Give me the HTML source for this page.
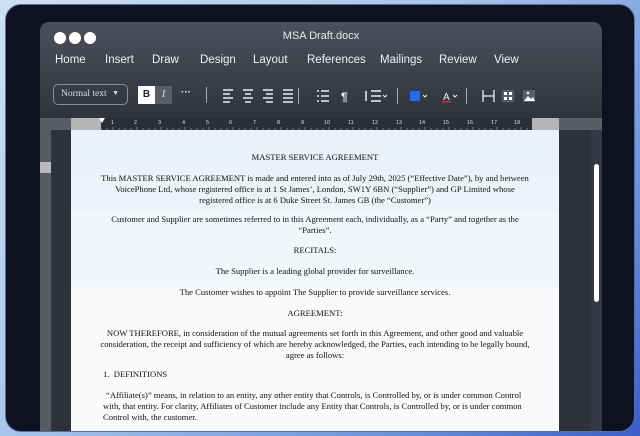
<!DOCTYPE html>
<html><head><meta charset="utf-8"><style>
*{margin:0;padding:0;box-sizing:border-box}
body{width:640px;height:436px;overflow:hidden;background:linear-gradient(135deg,#cfe0f4 0%,#a9c6ec 40%,#6f95dc 75%,#3a5fc8 100%);position:relative;font-family:"Liberation Sans",sans-serif}
.frame{position:absolute;left:5px;top:4px;width:630px;height:428px;background:#0d1120;border-radius:16px;border:1px solid #5a6f99;overflow:hidden}
.win{position:absolute;left:34px;top:17px;width:562px;height:420px;background:linear-gradient(#4d505c,#2f323d 100px);border-radius:9px 9px 0 0;overflow:hidden}
.dots{position:absolute;left:14px;top:9px}
.dots span{display:inline-block;width:12px;height:12px;border-radius:50%;background:#fff;margin-right:3px}
.title{position:absolute;left:0;right:0;top:8px;text-align:center;color:#e8e8ee;font-size:11px}
.menu{position:absolute;top:32px;left:15px;color:#f0f0f5;font-size:11.5px;white-space:nowrap}
.menu span{position:absolute}
.ruler{position:absolute;left:0;top:96px;width:562px;height:12px;background:#5a5d68}
.page{position:absolute;left:31px;top:108px;width:488px;height:320px;background:#f8fafc;font-family:"Liberation Serif",serif;font-size:8.6px;color:#111}
.t{position:absolute;left:0;right:0;text-align:center;white-space:nowrap}
.l{position:absolute;left:32px;white-space:nowrap}
</style></head><body>
<div class="frame">
<div class="win">
 <div class="dots"><span></span><span></span><span></span></div>
 <div class="title">MSA Draft.docx</div>
 <div class="menu">
  <span style="left:0">Home</span><span style="left:50px">Insert</span><span style="left:97px">Draw</span><span style="left:145px">Design</span><span style="left:198px">Layout</span><span style="left:252px">References</span><span style="left:325px">Mailings</span><span style="left:384px">Review</span><span style="left:439px">View</span>
 </div>
 <div style="position:absolute;left:13px;top:62px;width:75px;height:21px;border:1px solid #8a8d98;border-radius:5px;color:#ddd;font-family:'Liberation Serif',serif;font-size:9.5px;padding:4px 0 0 7px">Normal text <span style="position:absolute;right:8px;top:4px;font-size:7px">▼</span></div>
 <div style="position:absolute;left:98px;top:64px;width:17px;height:18px;background:#fff;color:#222;font-weight:bold;font-size:10px;text-align:center;line-height:18px">B</div>
 <div style="position:absolute;left:115px;top:64px;width:17px;height:18px;background:#5a5d68;color:#ddd;font-style:italic;font-size:10px;text-align:center;line-height:18px;font-family:'Liberation Serif',serif">I</div>
 <div style="position:absolute;left:141px;top:65px;color:#eee;font-size:10px;font-weight:bold">···</div>
 <div style="position:absolute;left:166px;top:65px;width:1px;height:16px;background:#aaa"></div>
 <svg style="position:absolute;left:180px;top:66px" width="350" height="16" fill="#eee" stroke="#eee">
  <g stroke-width="1.6">
   <path d="M3 2h10M3 6h7M3 10h10M3 14h7"/>
   <path d="M23 2h10M25 6h6M23 10h10M25 14h6"/>
   <path d="M43 2h10M46 6h7M43 10h10M46 14h7"/>
   <path d="M63 2h10M63 6h10M63 10h10M63 14h10"/>
  </g>
  <rect x="78" y="0" width="1" height="16" stroke="none" fill="#aaa"/>
  <g stroke-width="1.6"><path d="M97 3h2M101 3h8M97 8h2M101 8h8M97 13h2M101 13h8"/></g>
  <text x="121" y="13" font-size="12" stroke="none" font-weight="bold">¶</text>
  <g stroke-width="1.5"><path d="M151 3h10M151 8h10M151 13h10M146 3v10"/><path d="M163 7l2 2 2-2" fill="none" stroke-width="1"/></g>
  <rect x="177" y="0" width="1" height="16" stroke="none" fill="#aaa"/>
  <rect x="190" y="3" width="10" height="10" fill="#1f6ff0" stroke="none"/>
  <path d="M203 7l2 2 2-2" fill="none" stroke-width="1"/>
  <text x="223" y="12" font-size="10" stroke="none" fill="#eee">A</text>
  <rect x="222" y="13" width="9" height="1.5" fill="#d03030" stroke="none"/>
  <path d="M233 7l2 2 2-2" fill="none" stroke-width="1"/>
  <rect x="246" y="0" width="1" height="16" stroke="none" fill="#aaa"/>
  <path d="M263 2v12M274 2v12M263 8h11" fill="none" stroke-width="1.3"/>
  <rect x="282" y="2" width="12" height="12" fill="#5a5d68" stroke="none"/>
  <path d="M284 4h3v3h-3zM289 4h3v3h-3zM284 9h3v3h-3zM289 9h3v3h-3z" stroke="none" fill="#fff"/>
  <rect x="303" y="2" width="12" height="12" fill="#5a5d68" stroke="none"/>
  <path d="M304 13l4-5 3 3 2-2 2 4z" stroke="none" fill="#fff"/><circle cx="308" cy="5" r="1.3" stroke="none"/>
 </svg>
 <div class="ruler">
  <div style="position:absolute;left:31px;top:0;width:30px;height:12px;background:#b5b5b8"></div>
  <div style="position:absolute;left:61px;top:0;width:431px;height:12px;background:#2b2e39"></div>
  <div style="position:absolute;left:492px;top:0;width:27px;height:12px;background:#b5b5b8"></div>
  <svg style="position:absolute;left:61px;top:0" width="431" height="12" font-size="5.5" fill="#ddd">
   <text x="10" y="6">1</text><text x="33" y="6">2</text><text x="57" y="6">3</text><text x="81" y="6">4</text><text x="105" y="6">5</text><text x="128" y="6">6</text><text x="152" y="6">7</text><text x="176" y="6">8</text><text x="200" y="6">9</text><text x="223" y="6">10</text><text x="247" y="6">11</text><text x="271" y="6">12</text><text x="295" y="6">13</text><text x="318" y="6">14</text><text x="342" y="6">15</text><text x="366" y="6">16</text><text x="390" y="6">17</text><text x="413" y="6">18</text>
   <path d="M0 10v2M6 10v2M12 9v3M18 10v2M24 10v2M30 10v2M36 9v3M42 10v2M48 10v2M54 10v2M60 9v3M66 10v2M72 10v2M78 10v2M84 9v3M90 10v2M96 10v2M102 10v2M108 9v3M114 10v2M120 10v2M126 10v2M132 9v3M138 10v2M144 10v2M150 10v2M156 9v3M162 10v2M168 10v2M174 10v2M180 9v3M186 10v2M192 10v2M198 10v2M204 9v3M210 10v2M216 10v2M222 10v2M228 9v3M234 10v2M240 10v2M246 10v2M252 9v3M258 10v2M264 10v2M270 10v2M276 9v3M282 10v2M288 10v2M294 10v2M300 9v3M306 10v2M312 10v2M318 10v2M324 9v3M330 10v2M336 10v2M342 10v2M348 9v3M354 10v2M360 10v2M366 10v2M372 9v3M378 10v2M384 10v2M390 10v2M396 9v3M402 10v2M408 10v2M414 10v2M420 9v3M426 10v2" stroke="#bbb" stroke-width="0.6"/>
  </svg>
  <div style="position:absolute;left:59px;top:0;width:0;height:0;border-left:3px solid transparent;border-right:3px solid transparent;border-top:5px solid #fff"></div>
 </div>
 <div style="position:absolute;left:0;top:108px;width:11px;height:320px;background:#585b66"></div>
 <div style="position:absolute;left:0;top:140px;width:11px;height:11px;background:#b8b8bb"></div>
 <div style="position:absolute;left:551px;top:108px;width:11px;height:320px;background:#353845"></div>
 <div style="position:absolute;left:554px;top:142px;width:5px;height:138px;background:#fff;border-radius:3px"></div>
 <div class="page">
  <div style="position:absolute;left:0;top:0;width:488px;height:43px;background:#eaf1f8"></div>
  <div style="position:absolute;left:0;top:43px;width:488px;height:39px;background:#edf2f8"></div>
  <div style="position:absolute;left:0;top:82px;width:488px;height:75px;background:#f2f6f9"></div>
  <div class="t" style="top:22px">MASTER SERVICE AGREEMENT</div>
  <div class="t" style="top:43px">This MASTER SERVICE AGREEMENT is made and entered into as of July 29th, 2025 (“Effective Date”), by and between</div>
  <div class="t" style="top:54px">VoicePhone Ltd, whose registered office is at 1 St James’, London, SW1Y 6BN (“Supplier”) and GP Limited whose</div>
  <div class="t" style="top:65px">registered office is at 6 Duke Street St. James GB (the “Customer”)</div>
  <div class="t" style="top:84px">Customer and Supplier are sometimes referred to in this Agreement each, individually, as a “Party” and together as the</div>
  <div class="t" style="top:95px">“Parties”.</div>
  <div class="t" style="top:115px">RECITALS:</div>
  <div class="t" style="top:136px">The Supplier is a leading global provider for surveillance.</div>
  <div class="t" style="top:157px">The Customer wishes to appoint The Supplier to provide surveillance services.</div>
  <div class="t" style="top:178px">AGREEMENT:</div>
  <div class="t" style="top:198px">NOW THEREFORE, in consideration of the mutual agreements set forth in this Agreement, and other good and valuable</div>
  <div class="t" style="top:209px">consideration, the receipt and sufficiency of which are hereby acknowledged, the Parties, each intending to be legally bound,</div>
  <div class="t" style="top:220px">agree as follows:</div>
  <div class="l" style="top:239px">1.&nbsp; DEFINITIONS</div>
  <div class="l" style="top:260px;left:35px">“Affiliate(s)” means, in relation to an entity, any other entity that Controls, is Controlled by, or is under common Control</div>
  <div class="l" style="top:271px">with, that entity. For clarity, Affiliates of Customer include any Entity that Controls, is Controlled by, or is under common</div>
  <div class="l" style="top:282px">Control with, the customer.</div>
 </div>
</div>
</div>
</body></html>
